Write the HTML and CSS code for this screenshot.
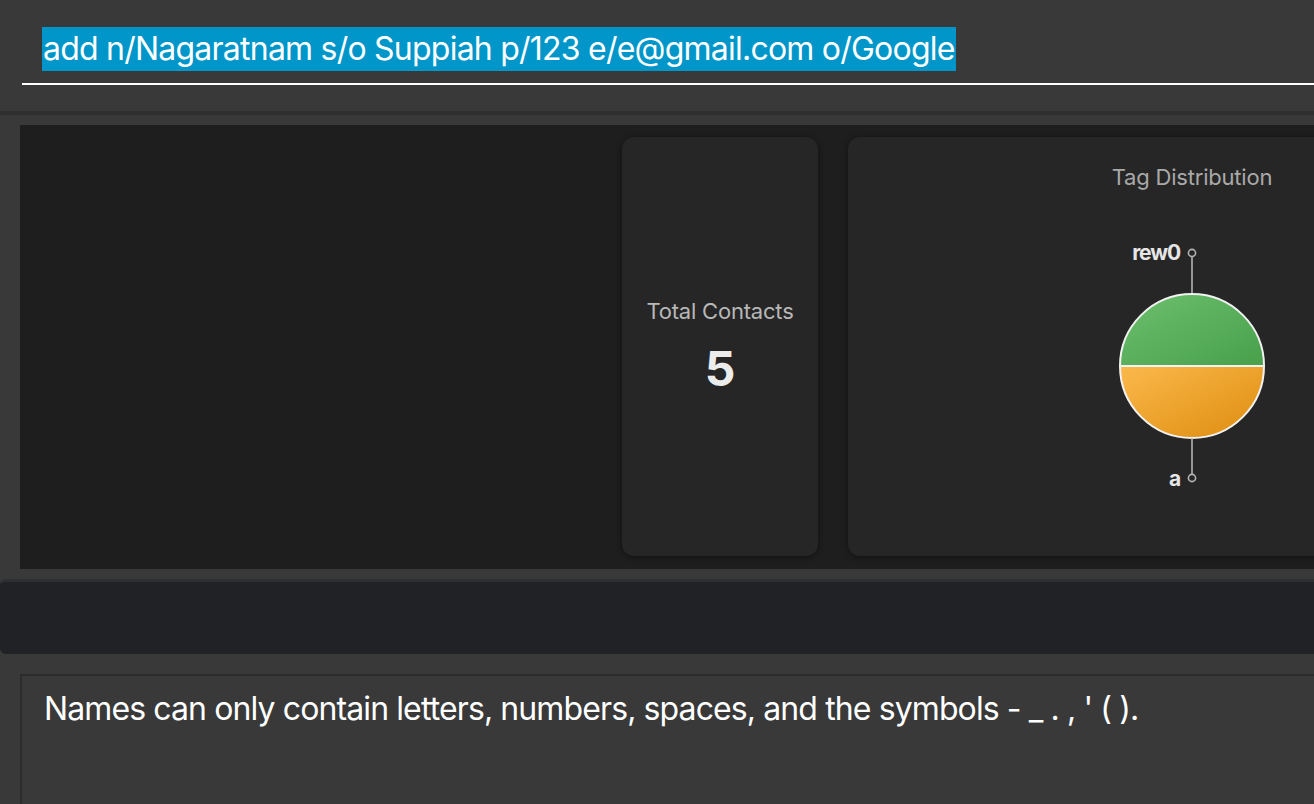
FILE: index.html
```html
<!DOCTYPE html>
<html lang="en">
<head>
<meta charset="utf-8">
<title>Address Book</title>
<link rel="stylesheet" href="styles.css">
</head>
<body>
<div class="app">
  <header class="command-bar">
    <div class="command-field"><span class="selected">add n/Nagaratnam s/o Suppiah p/123 e/e@gmail.com o/Google</span></div>
  </header>
  <div class="separator"></div>
  <main class="main-area">
    <section class="dashboard">
      <div class="list-pane"></div>
      <div class="card stat-card">
        <div class="stat-label">Total Contacts</div>
        <div class="stat-value">5</div>
      </div>
      <div class="card chart-card">
        <div class="chart-title">Tag Distribution</div>
        <svg class="pie" width="200" height="262" viewBox="0 0 200 262">
          <defs>
            <linearGradient id="gGreen" x1="0" y1="0" x2="1" y2="1">
              <stop offset="0" stop-color="#6cbf6e"/>
              <stop offset="1" stop-color="#48a04b"/>
            </linearGradient>
            <linearGradient id="gOrange" x1="0" y1="0" x2="1" y2="1">
              <stop offset="0" stop-color="#fbb94c"/>
              <stop offset="1" stop-color="#de8c0e"/>
            </linearGradient>
          </defs>
          <line x1="100" y1="22" x2="100" y2="59" class="leader"/>
          <circle cx="100" cy="18" r="3.6" class="dot"/>
          <text x="88" y="25" class="slice-label" text-anchor="end">rew0</text>
          <path d="M28 131 A72 72 0 0 1 172 131 Z" fill="url(#gGreen)" class="slice"/>
          <path d="M28 131 A72 72 0 0 0 172 131 Z" fill="url(#gOrange)" class="slice"/>
          <line x1="100" y1="203" x2="100" y2="239" class="leader"/>
          <circle cx="100" cy="243" r="3.6" class="dot"/>
          <text x="88" y="251" class="slice-label" text-anchor="end">a</text>
        </svg>
      </div>
    </section>
  </main>
  <div class="status-bar"></div>
  <section class="result-box">
    <p class="result-text">Names can only contain letters, numbers, spaces, and the symbols - _ . , ' ( ).</p>
  </section>
</div>
</body>
</html>
```

FILE: styles.css
```css
* {
  box-sizing: border-box;
}

html, body {
  margin: 0;
  padding: 0;
}

body {
  width: 1314px;
  height: 804px;
  overflow: hidden;
  background: #393939;
  font-family: Inter, "Noto Sans", sans-serif;
  color: #ffffff;
}

.app {
  display: flex;
  flex-direction: column;
  height: 804px;
}

.command-bar {
  height: 111px;
  padding: 27px 0 0 22px;
}

.command-field {
  border-bottom: 2px solid #ffffff;
  padding: 0 0 12px 20px;
  height: 58px;
  white-space: nowrap;
}

.selected {
  display: inline-block;
  background: #0096c9;
  color: #ffffff;
  font-size: 32px;
  line-height: 44px;
  height: 44px;
  letter-spacing: -0.77px;
  padding: 0 1px;
}

.separator {
  height: 4px;
  background: #2e2e2e;
}

.main-area {
  padding: 10px 0 0 20px;
}

.dashboard {
  height: 444px;
  background: #1e1e1e;
  padding: 12px 0 13px 0;
  display: flex;
  gap: 30px;
  overflow: hidden;
}

.list-pane {
  flex: 0 0 572px;
}

.card {
  background: #262626;
  border-radius: 12px;
  box-shadow: 0 1px 6px rgba(0, 0, 0, 0.45);
  flex-shrink: 0;
}

.stat-card {
  width: 196px;
  display: flex;
  flex-direction: column;
  align-items: center;
  justify-content: center;
}

.stat-label {
  font-size: 22px;
  color: #b8b8b8;
  letter-spacing: -0.2px;
}

.stat-value {
  font-size: 48px;
  font-weight: 700;
  color: #ececec;
  margin-top: 19px;
  line-height: 1.1;
}

.chart-card {
  width: 688px;
  display: flex;
  flex-direction: column;
  align-items: center;
  padding-top: 27px;
}

.chart-title {
  font-size: 22px;
  color: #a9a9a9;
  letter-spacing: -0.2px;
}

.pie {
  display: block;
  margin-top: 45px;
}

.leader {
  stroke: #b4b4b4;
  stroke-width: 1.6;
}

.dot {
  fill: none;
  stroke: #b4b4b4;
  stroke-width: 1.6;
}

.slice {
  stroke: #f2f2f2;
  stroke-width: 2;
}

.slice-label {
  font-family: Inter, "Noto Sans", sans-serif;
  font-size: 21px;
  font-weight: 700;
  fill: #e6e6e6;
  letter-spacing: -1.1px;
}

.status-bar {
  margin-top: 10px;
  height: 75px;
  background: #212226;
  border-top: 3px solid #2e2f31;
  border-radius: 6px 0 0 6px;
}

.result-box {
  flex: 1;
  margin: 20px 0 0 20px;
  border: 2px solid #2c2c2c;
  border-right: none;
  border-bottom: none;
  background: #393939;
  padding: 13px 0 0 22px;
}

.result-text {
  margin: 0;
  font-size: 32px;
  line-height: 40px;
  letter-spacing: -0.89px;
  white-space: nowrap;
  color: #ffffff;
}
```
